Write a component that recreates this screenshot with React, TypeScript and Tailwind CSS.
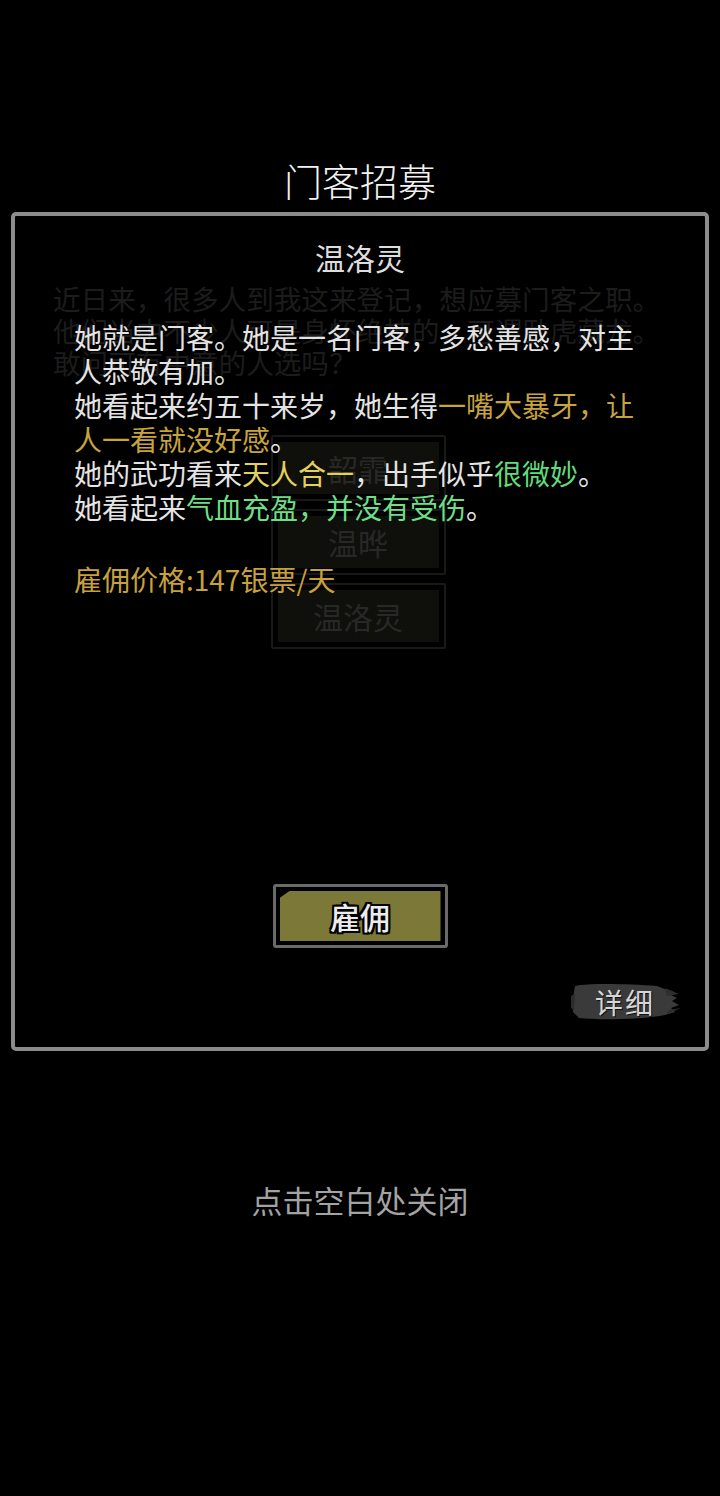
import React from "react";

const cjk = { fontFamily: '"Noto Sans CJK SC", "Noto Sans", sans-serif' };

function GhostBox({ text }: { text: string }) {
  return (
    <div className="w-[175px] h-[66px] border-2 border-[#191917] rounded-[2px] p-[5px]">
      <div className="w-full h-full bg-[#0f0f0b] flex items-center justify-center text-[30px] leading-none text-[#282826]">
        {text}
      </div>
    </div>
  );
}

function BrushBg() {
  return (
    <svg className="absolute inset-0" width="112" height="40" viewBox="0 0 112 40">
      <path
        d="M6 4 C20 1 60 2 88 4 L98 8 L104 9 L100 12 L108 16 L103 19 L110 23 L102 26 L106 30 L96 33 C70 38 30 38 10 36 L4 30 L3 20 L5 10 Z"
        fill="#3a3a3a"
      />
      <path d="M2 14 L6 12 L5 28 L2 26 Z" fill="#2c2c2c" />
      <path d="M96 6 L110 12 L98 14 Z M100 28 L112 26 L98 32 Z" fill="#2e2e2e" />
    </svg>
  );
}

export default function App() {
  return (
    <div
      className="relative w-[720px] h-[1496px] bg-black flex flex-col items-center overflow-hidden"
      style={cjk}
    >
      {/* dimmed page underneath */}
      <div className="absolute inset-0 flex flex-col items-center">
        <div className="mt-[282px] ml-[53px] self-start w-[640px] text-[27.6px] leading-[32px] text-[#1c1c1c]">
          <div>近日来，很多人到我这来登记，想应募门客之职。</div>
          <div>他们当中不少人可是身怀绝技的，可谓卧虎藏龙。</div>
          <div>敢问可有中意的人选吗？</div>
        </div>
        <div className="mt-[57px] ml-[-4px] flex flex-col gap-[8px]">
          <GhostBox text="韶霏" />
          <GhostBox text="温晔" />
          <GhostBox text="温洛灵" />
        </div>
      </div>

      <div className="relative mt-[154px] text-[38px] leading-[52px] text-[#f2f2f2] font-light">
        门客招募
      </div>

      <div className="relative mt-[6px] w-[698px] h-[839px] border-4 border-[#8c8c8c] rounded-[5px] flex flex-col">
        <div className="pt-[20px] text-center text-[30px] leading-[42px] text-[#dedede]">温洛灵</div>

        <div className="mt-[42px] pl-[59px] w-[640px] text-[28px] leading-[34px] text-[#e4e4e4]">
          <div className="w-[575px]">
            她就是门客。她是一名门客，多愁善感，对主人恭敬有加。
          </div>
          <div className="w-[575px]">
            她看起来约五十来岁，她生得
            <span className="text-[#c8a43e]">一嘴大暴牙，让人一看就没好感</span>。
          </div>
          <div className="w-[575px]">
            她的武功看来<span className="text-[#e2d25c]">天人合一</span>，出手似乎
            <span className="text-[#5fdc7c]">很微妙</span>。
          </div>
          <div className="w-[575px]">
            她看起来<span className="text-[#6ede88]">气血充盈，并没有受伤</span>。
          </div>
          <div className="mt-[38px] text-[#c8a03e]">雇佣价格:147银票/天</div>
        </div>

        <div className="flex-1" />

        <div className="self-center w-[175px] h-[64px] border-[3px] border-[#6a6a6a] rounded-[3px] bg-black p-[4px]">
          <div className="w-full h-full bg-[#7b7838] [clip-path:polygon(10px_0,100%_0,100%_100%,0_100%,0_7px)] flex items-center justify-center">
            <span className="text-[30px] leading-none font-medium text-[#ececec] [text-shadow:2px_0_0_#000,-2px_0_0_#000,0_2px_0_#000,0_-2px_0_#000,2px_2px_0_#000,-2px_-2px_0_#000,2px_-2px_0_#000,-2px_2px_0_#000]">
              雇佣
            </span>
          </div>
        </div>

        <div className="mt-[34px] mb-[25px] self-end mr-[24px] relative w-[112px] h-[40px] flex items-center justify-center">
          <BrushBg />
          <span className="relative text-[28px] leading-none text-[#d6d6d6] tracking-[2px] [text-shadow:1px_1px_0_#111]">
            详细
          </span>
        </div>
      </div>

      <div className="relative mt-[129px] text-[31px] leading-[40px] text-[#a3a3a3]">点击空白处关闭</div>
    </div>
  );
}
